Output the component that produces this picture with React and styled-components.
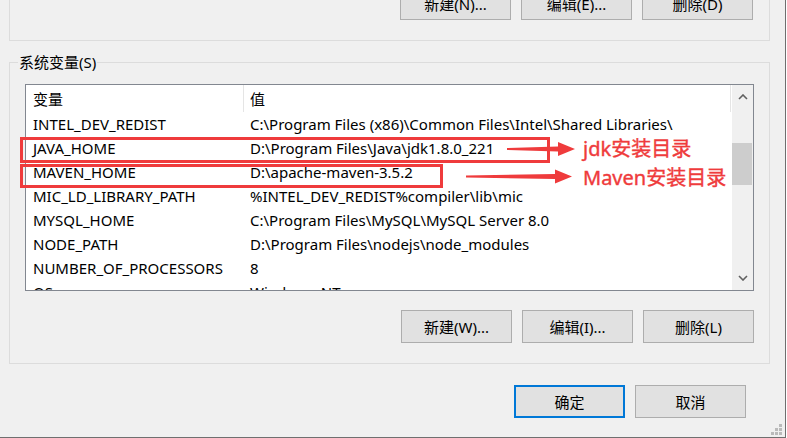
import React from "react";
import styled, { createGlobalStyle } from "styled-components";

const GlobalStyle = createGlobalStyle`
  html, body {
    margin: 0;
    padding: 0;
    background: #ffffff;
  }
  body {
    font-family: "Noto Sans", "Noto Sans CJK SC", sans-serif;
    font-size: 15px;
    color: #000;
  }
`;

const Window = styled.div`
  position: relative;
  box-sizing: border-box;
  width: 786px;
  height: 438px;
  overflow: hidden;
  background: #f0f0f0;
  border-right: 1px solid #6f6f6f;
  border-bottom: 1px solid #6f6f6f;
  padding: 0 15px 0 9px;
  display: flex;
  flex-direction: column;
`;

const TopGroup = styled.div`
  margin-top: -13px;
  border: 1px solid #dcdcdc;
  border-top: none;
  padding-bottom: 20px;
`;

const GroupBox = styled.div`
  position: relative;
  margin-top: 21px;
  border: 1px solid #dcdcdc;
  padding: 21px 15px 20px 15px;
  display: flex;
  flex-direction: column;
`;

const GroupLabel = styled.span`
  position: absolute;
  top: -12px;
  left: 8px;
  padding: 0 1px;
  background: #f0f0f0;
  line-height: 22px;
`;

const ButtonRow = styled.div`
  display: flex;
  justify-content: flex-end;
  gap: 10px;
  padding-right: ${(p) => p.$right || 0}px;
  margin-top: ${(p) => p.$top || 0}px;
`;

const Button = styled.button`
  box-sizing: border-box;
  width: 111px;
  height: 33px;
  background: #e1e1e1;
  border: ${(p) => (p.$default ? "2px solid #0078d7" : "1px solid #adadad")};
  font-family: inherit;
  font-size: 15px;
  color: #000;
  padding: 0;
`;

const ListBox = styled.div`
  box-sizing: border-box;
  height: 207px;
  border: 1px solid #828790;
  background: #fff;
  display: flex;
`;

const ListContent = styled.div`
  flex: 1;
  overflow: hidden;
`;

const HeaderRow = styled.div`
  display: flex;
  height: 27px;
  width: 705px;
`;

const HeaderCell = styled.div`
  box-sizing: border-box;
  width: ${(p) => p.$w}px;
  padding-left: ${(p) => p.$pad}px;
  padding-top: 2px;
  border-right: 1px solid #e5e5e5;
  line-height: 25px;
  white-space: nowrap;
`;

const Row = styled.div`
  display: flex;
  height: 24px;
  line-height: 24px;
`;

const Cell = styled.div`
  box-sizing: border-box;
  width: ${(p) => p.$w}px;
  padding-left: ${(p) => p.$pad}px;
  white-space: nowrap;
  overflow: hidden;
`;

const ScrollBar = styled.div`
  width: 21px;
  background: #f0f0f0;
  display: flex;
  flex-direction: column;
`;

const ScrollArrow = styled.div`
  height: 24px;
  display: flex;
  align-items: center;
  justify-content: center;
`;

const ScrollTrack = styled.div`
  flex: 1;
`;

const Thumb = styled.div`
  margin: ${(p) => p.$offset}px 1px 0 0;
  height: 42px;
  background: #cdcdcd;
`;

const Footer = styled.div`
  display: flex;
  justify-content: flex-end;
  gap: 10px;
  margin-top: 21px;
  padding-right: 24px;
`;

const Overlay = styled.svg`
  position: absolute;
  left: 0;
  top: 0;
  pointer-events: none;
`;

const Mark = styled.div`
  position: absolute;
  box-sizing: border-box;
  left: ${(p) => p.$x}px;
  top: ${(p) => p.$y}px;
  width: ${(p) => p.$w}px;
  height: ${(p) => p.$h}px;
  border: 3px solid #ef3b3c;
`;

const Note = styled.span`
  position: absolute;
  left: ${(p) => p.$x}px;
  top: ${(p) => p.$y}px;
  color: #ef3b3c;
  font-size: 20px;
  font-weight: 400;
  line-height: 24px;
  white-space: nowrap;
  -webkit-text-stroke: 0.4px #ef3b3c;
`;

const Grip = styled.svg`
  position: absolute;
  left: 771px;
  top: 424px;
`;

const vars = [
  ["INTEL_DEV_REDIST", "C:\\Program Files (x86)\\Common Files\\Intel\\Shared Libraries\\"],
  ["JAVA_HOME", "D:\\Program Files\\Java\\jdk1.8.0_221"],
  ["MAVEN_HOME", "D:\\apache-maven-3.5.2"],
  ["MIC_LD_LIBRARY_PATH", "%INTEL_DEV_REDIST%compiler\\lib\\mic"],
  ["MYSQL_HOME", "C:\\Program Files\\MySQL\\MySQL Server 8.0"],
  ["NODE_PATH", "D:\\Program Files\\nodejs\\node_modules"],
  ["NUMBER_OF_PROCESSORS", "8"],
  ["OS", "Windows_NT"],
];

function Chevron({ up }) {
  return (
    <svg width="10" height="6" viewBox="0 0 10 6">
      <polyline
        points={up ? "1,5 5,1 9,5" : "1,1 5,5 9,1"}
        fill="none"
        stroke="#606060"
        strokeWidth="1.6"
      />
    </svg>
  );
}

function App() {
  return (
    <>
      <GlobalStyle />
      <Window>
        <TopGroup>
          <ButtonRow $right={16}>
            <Button>新建(N)...</Button>
            <Button>编辑(E)...</Button>
            <Button>删除(D)</Button>
          </ButtonRow>
        </TopGroup>

        <GroupBox>
          <GroupLabel>系统变量(S)</GroupLabel>
          <ListBox>
            <ListContent>
              <HeaderRow>
                <HeaderCell $w={218} $pad={7}>变量</HeaderCell>
                <HeaderCell $w={487} $pad={6}>值</HeaderCell>
              </HeaderRow>
              {vars.map(([name, value]) => (
                <Row key={name}>
                  <Cell $w={218} $pad={7}>{name}</Cell>
                  <Cell $w={487} $pad={6}>{value}</Cell>
                </Row>
              ))}
            </ListContent>
            <ScrollBar>
              <ScrollArrow>
                <Chevron up />
              </ScrollArrow>
              <ScrollTrack>
                <Thumb $offset={34} />
              </ScrollTrack>
              <ScrollArrow>
                <Chevron />
              </ScrollArrow>
            </ScrollBar>
          </ListBox>
          <ButtonRow $top={19}>
            <Button>新建(W)...</Button>
            <Button>编辑(I)...</Button>
            <Button>删除(L)</Button>
          </ButtonRow>
        </GroupBox>

        <Footer>
          <Button $default>确定</Button>
          <Button>取消</Button>
        </Footer>

        <Mark $x={20} $y={137} $w={530} $h={26} />
        <Mark $x={20} $y={164} $w={423} $h={24} />
        <Overlay width="786" height="438">
          <polygon
            points="507,148 558,146.5 558,142 575,149 558,156 558,151.5 507,150"
            fill="#ef3b3c"
          />
          <polygon
            points="466,175.5 555,174 555,169.5 572,176.5 555,183.5 555,179 466,177.5"
            fill="#ef3b3c"
          />
        </Overlay>
        <Note $x={583} $y={137}>jdk安装目录</Note>
        <Note $x={583} $y={166}>Maven安装目录</Note>

        <Grip width="11" height="11" viewBox="0 0 11 11">
          <rect x="8" y="0" width="3" height="3" fill="#bababa" />
          <rect x="4" y="4" width="3" height="3" fill="#bababa" />
          <rect x="8" y="4" width="3" height="3" fill="#bababa" />
          <rect x="0" y="8" width="3" height="3" fill="#bababa" />
          <rect x="4" y="8" width="3" height="3" fill="#bababa" />
          <rect x="8" y="8" width="3" height="3" fill="#bababa" />
        </Grip>
      </Window>
    </>
  );
}

export default App;
